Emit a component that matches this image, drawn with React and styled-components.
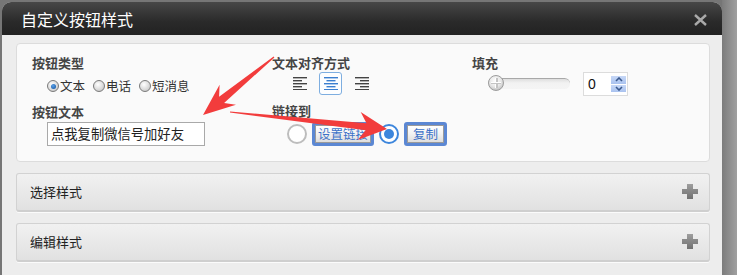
import React from "react";
import styled, { createGlobalStyle, css } from "styled-components";

const GlobalStyle = createGlobalStyle`
  html, body { margin: 0; padding: 0; }
  body {
    width: 737px; height: 275px; overflow: hidden;
    font-family: "Noto Sans CJK SC", "Noto Sans", sans-serif;
    background: linear-gradient(to right, #767676 0, #767676 722px, #7c7c7c 722px, #a0a0a0 737px);
  }
`;

const CJK = `"Noto Sans CJK SC", "Noto Sans", sans-serif`;

const Stage = styled.div`
  position: relative;
  width: 737px;
  height: 275px;
  padding: 2px 0 0 2px;
  box-sizing: border-box;
`;

const Dialog = styled.div`
  width: 720px;
  height: 273px;
  border-radius: 9px 9px 0 0;
  overflow: hidden;
  display: flex;
  flex-direction: column;
  background: #ededed;
`;

const TitleBar = styled.div`
  height: 33px;
  flex: none;
  display: flex;
  align-items: center;
  justify-content: space-between;
  padding: 0 15px 0 19px;
  background: linear-gradient(#474747, #2a2a2a 60%, #222);
`;

const Title = styled.div`
  color: #fff;
  font-family: ${CJK};
  font-size: 16px;
  line-height: 20px;
  margin-top: 1px;
`;

const Close = styled.svg`
  width: 13px;
  height: 12px;
  margin-top: 2px;
`;

const Body = styled.div`
  padding: 8px 12px 0 14px;
  display: flex;
  flex-direction: column;
  gap: 11px;
`;

const Panel = styled.div`
  height: 119px;
  box-sizing: border-box;
  background: #fafafa;
  border: 1px solid #dcdcdc;
  border-radius: 4px;
  padding: 11px 0 0 15px;
  display: grid;
  grid-template-columns: 240px 200px 1fr;
  align-items: start;
`;

const Column = styled.div`
  display: flex;
  flex-direction: column;
  align-items: flex-start;
`;

const Label = styled.div`
  font-family: ${CJK};
  font-weight: 700;
  font-size: 13px;
  line-height: 16px;
  height: 16px;
  color: #454545;
  margin-top: ${(p) => p.$top || 0}px;
`;

const RadioRow = styled.div`
  display: flex;
  align-items: center;
  margin: 6px 0 0 15px;
  height: 18px;
`;

const RadioOpt = styled.label`
  display: flex;
  align-items: center;
  font-family: ${CJK};
  font-size: 12.5px;
  color: #333;
  margin-right: 8px;
  line-height: 18px;
`;

const SmallRadio = styled.span`
  width: 10px;
  height: 10px;
  border-radius: 50%;
  border: 1px solid #7a7a7a;
  background: radial-gradient(circle at 40% 35%, #ffffff, #d8d8d8 60%, #b8b8b8);
  margin-right: 1px;
  position: relative;
  flex: none;
  ${(p) =>
    p.$checked &&
    css`
      &::after {
        content: "";
        position: absolute;
        left: 2.5px; top: 2.5px;
        width: 5px; height: 5px;
        border-radius: 50%;
        background: radial-gradient(circle at 40% 35%, #5aa0e8, #0d4f9c);
      }
    `}
`;

const TextInput = styled.div`
  margin: 2px 0 0 15px;
  width: 153px;
  height: 22px;
  border: 1px solid #a9a9a9;
  background: #fff;
  font-family: ${CJK};
  font-size: 13.3px;
  line-height: 22px;
  color: #222;
  padding-left: 3px;
  box-sizing: content-box;
  white-space: nowrap;
  overflow: hidden;
`;

const AlignGroup = styled.div`
  display: flex;
  gap: 8px;
  margin: 1px 0 0 16px;
`;

const AlignBtn = styled.div`
  width: 23px;
  height: 23px;
  box-sizing: border-box;
  display: flex;
  align-items: center;
  justify-content: center;
  border-radius: 3px;
  border: 1px solid ${(p) => (p.$active ? "#7eaee0" : "transparent")};
  background: ${(p) => (p.$active ? "#fdfeff" : "transparent")};
`;

const LinkRow = styled.div`
  display: flex;
  align-items: center;
  margin: 3px 0 0 15px;
  height: 24px;
  gap: 5px;
`;

const BigRadio = styled.span`
  width: 20px;
  height: 20px;
  box-sizing: border-box;
  border-radius: 50%;
  background: #fff;
  flex: none;
  display: flex;
  align-items: center;
  justify-content: center;
  border: 2px solid ${(p) => (p.$checked ? "#3d86dc" : "#bdbdbd")};
  &::after {
    content: "";
    width: 10px;
    height: 10px;
    border-radius: 50%;
    background: ${(p) => (p.$checked ? "#3d86dc" : "transparent")};
  }
`;

const BtnFrame = styled.div`
  height: 24px;
  box-sizing: border-box;
  border: 3px solid #5b87d3;
  border-radius: 3px;
  display: flex;
  flex: none;
`;

const Btn = styled.div`
  height: 18px;
  box-sizing: border-box;
  border: 1px solid #9a9a9a;
  background: linear-gradient(#ffffff, #f2f2f2 50%, #dedede);
  color: #3d72c8;
  font-family: ${CJK};
  font-size: 12.5px;
  line-height: 16px;
  padding: 0 ${(p) => p.$px}px;
  white-space: nowrap;
`;

const FillRow = styled.div`
  display: flex;
  align-items: center;
  margin: 1px 0 0 16px;
  height: 24px;
  gap: 13px;
`;

const Track = styled.div`
  position: relative;
  width: 82px;
  height: 11px;
  box-sizing: border-box;
  border-radius: 6px;
  background: linear-gradient(#dedede, #f2f2f2 40%, #f4f4f4);
  border-top: 1px solid #a8a8a8;
  margin-top: -1px;
`;

const Thumb = styled.div`
  position: absolute;
  left: 0;
  top: -4px;
  width: 16px;
  height: 16px;
  box-sizing: border-box;
  border-radius: 50%;
  border: 1px solid #9c9c9c;
  background: radial-gradient(circle at 45% 35%, #ffffff, #e6e6e6 50%, #a8a8a8);
  &::before {
    content: "";
    position: absolute;
    left: 6px; top: 2px;
    width: 2px; height: 10px;
    background: #c4c4c4;
    border-left: 1px solid #fff;
  }
  &::after {
    content: "";
    position: absolute;
    left: 2px; top: 6px;
    width: 10px; height: 1px;
    background: #c4c4c4;
    border-top: 1px solid #fff;
  }
`;

const Spinner = styled.div`
  width: 45px;
  height: 24px;
  box-sizing: border-box;
  border: 1px solid #dcdcdc;
  background: #fff;
  display: flex;
  align-items: center;
  justify-content: space-between;
  padding: 0 1px 0 4px;
`;

const SpinValue = styled.span`
  font-family: "Liberation Sans", Arial, sans-serif;
  font-size: 14px;
  color: #111;
`;

const SpinArrows = styled.div`
  display: flex;
  flex-direction: column;
  gap: 1px;
  width: 15px;
`;

const SpinHalf = styled.div`
  height: 7.5px;
  background: linear-gradient(#c7d8f7, #a9c2ef);
  display: flex;
  align-items: center;
  justify-content: center;
`;

const Accordion = styled.div`
  height: 39px;
  box-sizing: border-box;
  border: 1px solid #d2d2d2;
  border-bottom: 2px solid #cfcfcf;
  border-radius: 3px;
  background: linear-gradient(#f1f1f1, #e9e9e9 50%, #e1e1e1);
  box-shadow: 0 1px 0 #fbfbfb;
  display: flex;
  align-items: center;
  justify-content: space-between;
  padding: 0 11px 0 13px;
`;

const AccTitle = styled.div`
  font-family: ${CJK};
  font-size: 13px;
  color: #222;
  line-height: 16px;
`;

const Plus = styled.div`
  position: relative;
  width: 16px;
  height: 15px;
  margin-top: -1px;
  &::before, &::after {
    content: "";
    position: absolute;
    background: linear-gradient(#9e9e9e, #707070);
  }
  &::before { left: 5px; top: 0; width: 6px; height: 15px; }
  &::after { left: 0; top: 5px; width: 16px; height: 5px; background: linear-gradient(#8c8c8c, #808080); }
`;

const Overlay = styled.svg`
  position: absolute;
  left: 0;
  top: 0;
  width: 737px;
  height: 275px;
  pointer-events: none;
`;

function AlignIcon({ mode, color }) {
  const widths = [14, 9, 14, 9, 14];
  return (
    <svg width="14" height="13" viewBox="0 0 14 13">
      {widths.map((w, i) => {
        const x = mode === "left" ? 0 : mode === "right" ? 14 - w : (14 - w) / 2;
        return <rect key={i} x={x} y={i * 3} width={w} height="1.4" fill={color} />;
      })}
    </svg>
  );
}

function arrowPoints(tail, tip, headLen, headHalf, shaftHalf, tailHalf) {
  const dx = tip[0] - tail[0];
  const dy = tip[1] - tail[1];
  const len = Math.hypot(dx, dy);
  const u = [dx / len, dy / len];
  const n = [-u[1], u[0]];
  const at = (d, w) => [tip[0] - u[0] * d + n[0] * w, tip[1] - u[1] * d + n[1] * w];
  const pts = [
    [tail[0] + n[0] * tailHalf, tail[1] + n[1] * tailHalf],
    at(headLen * 0.75, shaftHalf),
    at(headLen, headHalf),
    tip,
    at(headLen, -headHalf),
    at(headLen * 0.75, -shaftHalf),
    [tail[0] - n[0] * tailHalf, tail[1] - n[1] * tailHalf],
  ];
  return pts.map((p) => p.map((v) => v.toFixed(1)).join(",")).join(" ");
}

export default function App() {
  return (
    <>
      <GlobalStyle />
      <Stage>
        <Dialog>
          <TitleBar>
            <Title>自定义按钮样式</Title>
            <Close viewBox="0 0 13 12">
              <path d="M1 1 L12 11 M12 1 L1 11" stroke="#a9a9a9" strokeWidth="2.4" fill="none" />
            </Close>
          </TitleBar>
          <Body>
            <Panel>
              <Column>
                <Label>按钮类型</Label>
                <RadioRow>
                  <RadioOpt><SmallRadio $checked />文本</RadioOpt>
                  <RadioOpt><SmallRadio />电话</RadioOpt>
                  <RadioOpt><SmallRadio />短消息</RadioOpt>
                </RadioRow>
                <Label $top={9}>按钮文本</Label>
                <TextInput>点我复制微信号加好友</TextInput>
              </Column>
              <Column>
                <Label>文本对齐方式</Label>
                <AlignGroup>
                  <AlignBtn><AlignIcon mode="left" color="#444" /></AlignBtn>
                  <AlignBtn $active><AlignIcon mode="center" color="#3b7fd0" /></AlignBtn>
                  <AlignBtn><AlignIcon mode="right" color="#444" /></AlignBtn>
                </AlignGroup>
                <Label $top={8}>链接到</Label>
                <LinkRow>
                  <BigRadio />
                  <BtnFrame><Btn $px={2}>设置链接</Btn></BtnFrame>
                  <BigRadio $checked />
                  <BtnFrame><Btn $px={5}>复制</Btn></BtnFrame>
                </LinkRow>
              </Column>
              <Column>
                <Label>填充</Label>
                <FillRow>
                  <Track><Thumb /></Track>
                  <Spinner>
                    <SpinValue>0</SpinValue>
                    <SpinArrows>
                      <SpinHalf>
                        <svg width="8" height="5" viewBox="0 0 8 5"><path d="M1 4 L4 1 L7 4" stroke="#3b5a8e" strokeWidth="1.6" fill="none" /></svg>
                      </SpinHalf>
                      <SpinHalf>
                        <svg width="8" height="5" viewBox="0 0 8 5"><path d="M1 1 L4 4 L7 1" stroke="#3b5a8e" strokeWidth="1.6" fill="none" /></svg>
                      </SpinHalf>
                    </SpinArrows>
                  </Spinner>
                </FillRow>
              </Column>
            </Panel>
            <Accordion>
              <AccTitle>选择样式</AccTitle>
              <Plus />
            </Accordion>
            <Accordion>
              <AccTitle>编辑样式</AccTitle>
              <Plus />
            </Accordion>
          </Body>
        </Dialog>
        <Overlay viewBox="0 0 737 275">
          <polygon points={arrowPoints([274, 57], [203, 115], 32, 13, 4, 0.6)} fill="#f23c3c" />
          <polygon points={arrowPoints([230, 112], [387, 129], 28, 14, 3.5, 0.6)} fill="#f23c3c" />
        </Overlay>
      </Stage>
    </>
  );
}
